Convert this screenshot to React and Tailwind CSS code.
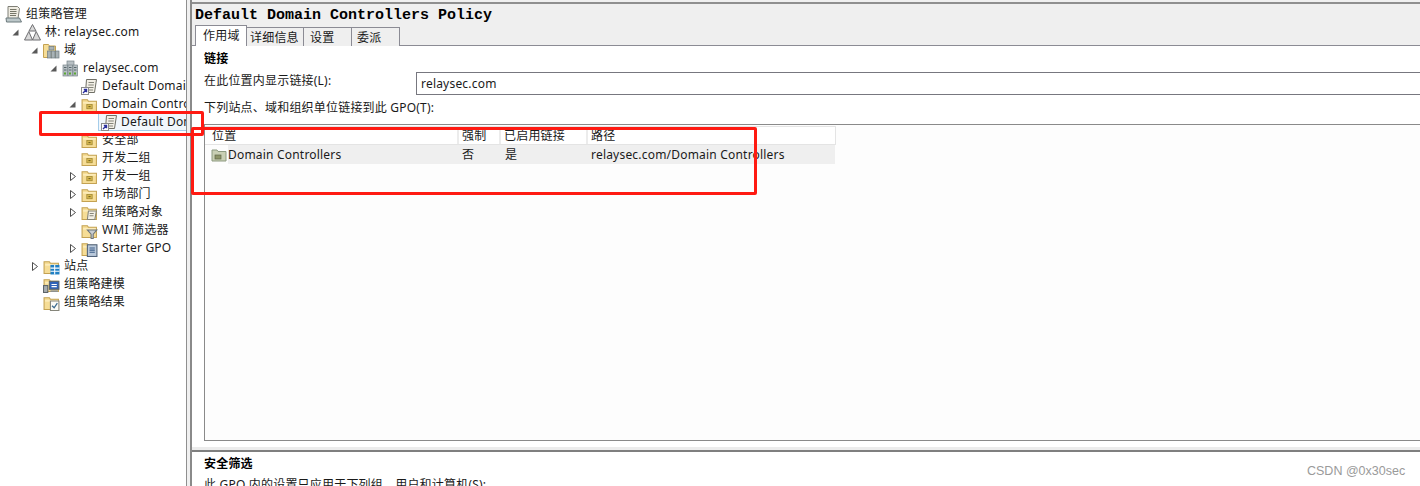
import React from 'react';

const uiFont = "font-['Noto_Sans','Noto_Sans_CJK_SC',sans-serif]";

const Folder = ({ children }) => (
  <svg width="17" height="17" viewBox="0 0 16 16" className="shrink-0">
    <path d="M1 3.500h5l1 1.500h7.500v9.500h-13.500z" fill="#f6dd96" stroke="#c4a252" />
    <path d="M2 6h12v1H2z" fill="#fff4cf" />
    {children}
  </svg>
);

const OuIcon = () => (
  <Folder>
    <rect x="5.500" y="8" width="5" height="4" fill="#d9b94f" stroke="#9c8430" strokeWidth="0.700" />
    <rect x="7" y="9.500" width="2" height="1" fill="#6d5e20" />
  </Folder>
);

const GpoLinkIcon = () => (
  <svg width="17" height="17" viewBox="0 0 17 17" className="shrink-0">
    <path d="M5.500 1.500h10l-2 13h-9z" fill="#f2efe6" stroke="#6f6f66" />
    <path d="M7.500 4.500h5.500M7.300 7h5.500M7 9.500h5.500M7 12h5" stroke="#85857a" />
    <rect x="0.500" y="9.500" width="7" height="7" fill="#fff" stroke="#8b8b8b" />
    <path d="M2 15l3-3M2.800 11.500h2.700v2.700" stroke="#2b2f9c" strokeWidth="1.400" fill="none" />
  </svg>
);

const ServerBlock = ({ x }) => (
  <g>
    <rect x={x} y="5" width="4.500" height="11" fill="#b8c0c4" stroke="#78858b" strokeWidth="0.700" />
    <path d={`M${x + 1} 7.500h2.500M${x + 1} 10h2.500`} stroke="#57666c" />
    <rect x={x + 1} y="12.500" width="2" height="2" fill="#5aa832" />
  </g>
);

const DomainIcon = () => (
  <svg width="17" height="17" viewBox="0 0 17 17" className="shrink-0">
    <rect x="5" y="1" width="7" height="5" fill="#b8c0c4" stroke="#78858b" strokeWidth="0.700" />
    <ServerBlock x={1} />
    <ServerBlock x={6} />
    <ServerBlock x={11} />
  </svg>
);

const DomainsIcon = () => (
  <svg width="17" height="17" viewBox="0 0 17 17" className="shrink-0">
    <path d="M0.500 2.500h5l1 1.500h6v11.500H0.500z" fill="#f6dd96" stroke="#c4a252" />
    <rect x="6" y="4.500" width="5" height="3.500" fill="#a8b2b6" stroke="#6f7c82" strokeWidth="0.700" />
    <rect x="4.500" y="9" width="3.500" height="7" fill="#a8b2b6" stroke="#6f7c82" strokeWidth="0.700" />
    <rect x="8.500" y="9" width="3.500" height="7" fill="#a8b2b6" stroke="#6f7c82" strokeWidth="0.700" />
    <rect x="12.500" y="9" width="3.500" height="7" fill="#a8b2b6" stroke="#6f7c82" strokeWidth="0.700" />
  </svg>
);

const ForestIcon = () => (
  <svg width="17" height="17" viewBox="0 0 17 17" className="shrink-0">
    <path d="M8.500 0.500l3.500 6.500H5zM4.800 7.500l3.700 8.500H0.500zM12.200 7.500l4.300 8.500H8.500z" fill="#d9d9d9" stroke="#6f6f72" />
  </svg>
);

const ConsoleIcon = () => (
  <svg width="17" height="17" viewBox="0 0 17 17" className="shrink-0">
    <path d="M3 0.500h9.500l2 2-1.500 10H3z" fill="#efece2" stroke="#7f7f76" />
    <path d="M5 3.500h6.500M5 5.500h6.500M5 7.500h6.500M5 9.500h6" stroke="#777769" />
    <path d="M1 12h13.500l2 4H1.500z" fill="#bcc7c9" stroke="#6c7a7d" />
  </svg>
);

const GpoFolderIcon = () => (
  <Folder>
    <path d="M7 6.500h7.500l-1.500 8H6z" fill="#f2efe6" stroke="#85857a" />
    <path d="M8.200 9h3.800M8 11h3.800" stroke="#85857a" />
  </Folder>
);

const WmiIcon = () => (
  <Folder>
    <path d="M6 7.500h9l-3.500 4v4h-2v-4z" fill="#c9ced2" stroke="#6f767b" />
  </Folder>
);

const StarterIcon = () => (
  <Folder>
    <rect x="6" y="4.500" width="9" height="11" fill="#b9c8da" stroke="#50627a" />
    <path d="M8 7.500h5M8 9.500h5M8 11.500h5" stroke="#3d5d88" />
  </Folder>
);

const SitesIcon = () => (
  <Folder>
    <rect x="7" y="6.500" width="8.500" height="9" fill="#1f7fc4" />
    <path d="M7 9.500h8.500M7 12.500h8.500M11 6.500v9" stroke="#fff" />
  </Folder>
);

const ModelingIcon = () => (
  <Folder>
    <rect x="0.500" y="9" width="4" height="6.500" fill="#a7adb0" stroke="#5d6468" />
    <rect x="6" y="5" width="9" height="7.500" fill="#2f62b8" stroke="#5d6468" />
    <path d="M8 8h5M8 10h5" stroke="#fff" />
    <path d="M7 13.500h7v1.500H7z" fill="#8a9094" />
  </Folder>
);

const ResultsIcon = () => (
  <Folder>
    <path d="M7 6.500h8v9H7z" fill="#fbfbf6" stroke="#85857a" />
    <path d="M8.500 11l2 2 3-4.500" stroke="#3d6b8f" strokeWidth="1.200" fill="none" />
  </Folder>
);

const Expanded = () => (
  <svg width="9" height="9" viewBox="0 0 9 9" className="shrink-0">
    <path d="M7.500 1.500v6h-6z" fill="#595959" />
  </svg>
);

const Collapsed = () => (
  <svg width="9" height="11" viewBox="0 0 9 11" className="shrink-0">
    <path d="M2.500 1.500l5 4-5 4z" fill="#fff" stroke="#4d4d4d" />
  </svg>
);

const TreeRow = ({ indent, toggle, icon, label, selected }) => (
  <div className={`flex h-[18px] items-center whitespace-nowrap ${indent}`}>
    <span className="flex w-[10px] shrink-0 items-center justify-center">
      {toggle === 'open' && <Expanded />}
      {toggle === 'closed' && <Collapsed />}
    </span>
    {selected ? (
      <span className="ml-[2px] flex h-[18px] flex-1 items-center border border-[#a5cdea] bg-[#f1f7fc] pl-[1px]">
        <span className="flex w-[18px] shrink-0 justify-center">{icon}</span>
        <span className="ml-[3px]">{label}</span>
      </span>
    ) : (
      <>
        <span className="ml-[3px] flex w-[18px] shrink-0 justify-center">{icon}</span>
        <span className="ml-[4px]">{label}</span>
      </>
    )}
  </div>
);

const tree = [
  { root: true, icon: <ConsoleIcon />, label: '组策略管理' },
  { indent: 'pl-[10px]', toggle: 'open', icon: <ForestIcon />, label: '林: relaysec.com' },
  { indent: 'pl-[29px]', toggle: 'open', icon: <DomainsIcon />, label: '域' },
  { indent: 'pl-[48px]', toggle: 'open', icon: <DomainIcon />, label: 'relaysec.com' },
  { indent: 'pl-[67px]', icon: <GpoLinkIcon />, label: 'Default Domain Policy' },
  { indent: 'pl-[67px]', toggle: 'open', icon: <OuIcon />, label: 'Domain Controllers' },
  { indent: 'pl-[86px]', icon: <GpoLinkIcon />, label: 'Default Domain Controllers Policy', selected: true },
  { indent: 'pl-[67px]', icon: <OuIcon />, label: '安全部' },
  { indent: 'pl-[67px]', icon: <OuIcon />, label: '开发二组' },
  { indent: 'pl-[67px]', toggle: 'closed', icon: <OuIcon />, label: '开发一组' },
  { indent: 'pl-[67px]', toggle: 'closed', icon: <OuIcon />, label: '市场部门' },
  { indent: 'pl-[67px]', toggle: 'closed', icon: <GpoFolderIcon />, label: '组策略对象' },
  { indent: 'pl-[67px]', icon: <WmiIcon />, label: 'WMI 筛选器' },
  { indent: 'pl-[67px]', toggle: 'closed', icon: <StarterIcon />, label: 'Starter GPO' },
  { indent: 'pl-[29px]', toggle: 'closed', icon: <SitesIcon />, label: '站点' },
  { indent: 'pl-[29px]', icon: <ModelingIcon />, label: '组策略建模' },
  { indent: 'pl-[29px]', icon: <ResultsIcon />, label: '组策略结果' },
];

const tabs = [
  { label: '作用域', className: 'w-[52px] pl-[7px]', active: true },
  { label: '详细信息', className: 'w-[57px] pl-[3px]' },
  { label: '设置', className: 'w-[48px] pl-[6px]' },
  { label: '委派', className: 'w-[48px] pl-[5px]' },
];

const columns = [
  { label: '位置', width: 'w-[252px]' },
  { label: '强制', width: 'w-[42px]' },
  { label: '已启用链接', width: 'w-[87px]' },
  { label: '路径', width: 'w-[249px]' },
];

export default function App() {
  return (
    <div className={`relative flex h-[486px] w-[1420px] overflow-hidden bg-white text-[12px] leading-[18px] tracking-[0.2px] text-[#1a1a1a] ${uiFont}`}>
      {/* tree pane */}
      <div className="w-[187px] shrink-0 overflow-hidden border-r border-[#8f8f8f] pt-[5px]">
        {tree.map((row) =>
          row.root ? (
            <div key={row.label} className="flex h-[18px] items-center pl-[5px]">
              <ConsoleIcon />
              <span className="ml-[4px]">{row.label}</span>
            </div>
          ) : (
            <TreeRow key={row.label} {...row} />
          )
        )}
      </div>

      {/* splitter */}
      <div className="w-[3px] shrink-0 bg-[#f0f0f0]" />

      {/* details pane */}
      <div className="flex min-w-0 flex-1 flex-col border-l-2 border-[#8a8a8a] bg-white">
        <div className="h-[2px] shrink-0 bg-[#f0f0f0]" />
        <div className="h-[2px] shrink-0 bg-[#8f8f8f]" />
        <div className="h-[42px] shrink-0 border-b border-[#8b8b94] bg-[#efefef] pl-[3px] pt-[3px]">
          <div className="h-[17px] font-['Liberation_Mono',monospace] text-[15px] font-bold leading-[17px] tracking-normal text-black">
            Default Domain Controllers Policy
          </div>
          <div className="mt-[1px] flex items-start">
            {tabs.map((tab) => (
              <div
                key={tab.label}
                className={`${tab.className} border-r border-t border-[#8b8b94] leading-[20px] ${tab.active ? 'z-10 h-[21px] border-l bg-white' : 'mt-[2px] h-[19px] bg-[#efefef]'}`}
              >
                {tab.label}
              </div>
            ))}
          </div>
        </div>

        <div className="flex h-[401px] shrink-0 flex-col pl-[12px] pt-[4px]">
          <div className="h-[18px] font-bold text-black">链接</div>
          <div className="mt-[4px] flex items-start">
            <span className="w-[212px] shrink-0">在此位置内显示链接(L):</span>
            <div className="flex h-[23px] flex-1 items-center border-y border-l border-[#77777f] pl-[4px]">relaysec.com</div>
          </div>
          <div className="mt-[4px] h-[18px]">下列站点、域和组织单位链接到此 GPO(T):</div>
          <div className="mt-[7px] flex h-[317px] flex-col border-b border-l border-t border-[#8a8a8a] bg-[#fdfdfd] pt-[1px]">
            <div className="flex h-[19px] w-[631px] border-b border-r border-t border-[#e4e4e4] bg-white">
              {columns.map((col, i) => (
                <div key={col.label} className={`${col.width} ${i > 0 ? 'border-l-2 border-[#ececec] pl-[3px]' : 'pl-[7px]'} leading-[17px]`}>
                  {col.label}
                </div>
              ))}
            </div>
            <div className="flex h-[19px] w-[630px] items-center leading-[20px]">
              <div className="flex w-[252px] items-center pl-[6px]">
                <svg width="16" height="16" viewBox="0 0 16 16" className="shrink-0">
                  <path d="M1 3h5l1 1.500h8V14H1z" fill="#c9cfb4" stroke="#8d9a80" />
                  <rect x="4" y="8" width="6" height="4" fill="#8d9468" stroke="#5e6648" strokeWidth="0.700" />
                </svg>
                <span className="ml-[1px] h-[19px] flex-1 bg-[#efefef]">Domain Controllers</span>
              </div>
              <div className="h-[19px] w-[42px] bg-[#efefef] pl-[5px]">否</div>
              <div className="h-[19px] w-[87px] bg-[#efefef] pl-[6px]">是</div>
              <div className="h-[19px] w-[249px] bg-[#efefef] pl-[5px]">relaysec.com/Domain Controllers</div>
            </div>
          </div>
        </div>

        {/* horizontal splitter + security filtering */}
        <div className="h-[5px] shrink-0 border-b-2 border-[#7f7f7f] bg-[#ececec]" />
        <div className="pl-[12px] pt-[3px]">
          <div className="h-[18px] font-bold text-black">安全筛选</div>
          <div className="mt-[3px]">此 GPO 内的设置只应用于下列组、用户和计算机(S):</div>
        </div>
      </div>

      {/* red annotation boxes */}
      <div className="absolute left-[39px] top-[111px] h-[25px] w-[165px] rounded-[2px] border-[3px] border-[#ff1a12]" />
      <div className="absolute left-[191px] top-[127px] h-[68px] w-[566px] rounded-[2px] border-[3px] border-[#ff1a12]" />

      {/* watermark */}
      <div className="absolute left-[1307px] top-[462px] font-['Liberation_Sans',sans-serif] text-[12.500px] leading-[18px] tracking-normal text-[#9a9a9a]">CSDN @0x30sec</div>
    </div>
  );
}
